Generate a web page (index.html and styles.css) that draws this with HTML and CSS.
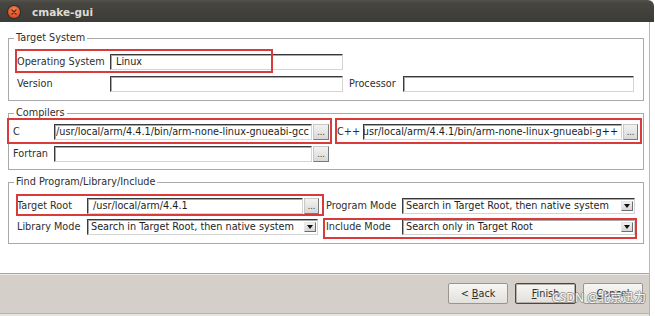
FILE: index.html
```html
<!DOCTYPE html>
<html>
<head>
<meta charset="utf-8">
<link rel="stylesheet" href="styles.css">
</head>
<body>
<div class="win">
  <header class="titlebar">
    <span class="close"><svg width="12" height="12" viewBox="0 0 12 12"><path d="M4 4 L8 8 M8 4 L4 8" stroke="#5a2412" stroke-width="1.3" stroke-linecap="round"/></svg></span>
    <span class="title">cmake-gui</span>
  </header>
  <main class="client">
    <div class="groups">
      <fieldset class="grp">
        <legend>Target System</legend>
        <div class="grid g1">
          <span class="lbl">Operating System</span>
          <div class="field"><span class="txt">Linux</span></div>
          <span></span><span></span>
          <span class="lbl">Version</span>
          <div class="field"></div>
          <span class="lbl lbl-r">Processor</span>
          <div class="field"></div>
        </div>
      </fieldset>

      <fieldset class="grp">
        <legend>Compilers</legend>
        <div class="grid g2">
          <span class="lbl">C</span>
          <div class="field flush"><span class="txt">/usr/local/arm/4.4.1/bin/arm-none-linux-gnueabi-gcc</span></div>
          <span class="dots">...</span>
          <span class="lbl lbl-r">C++</span>
          <div class="field scroll"><span class="txt">/usr/local/arm/4.4.1/bin/arm-none-linux-gnueabi-g++</span></div>
          <span class="dots">...</span>
          <span class="lbl">Fortran</span>
          <div class="field"></div>
          <span class="dots">...</span>
          <span></span><span></span><span></span>
        </div>
      </fieldset>

      <fieldset class="grp">
        <legend>Find Program/Library/Include</legend>
        <div class="grid g3">
          <span class="lbl">Target Root</span>
          <div class="field"><span class="txt">/usr/local/arm/4.4.1</span></div>
          <span class="dots">...</span>
          <span class="lbl lbl-r">Program Mode</span>
          <div class="combo"><span class="txt">Search in Target Root, then native system</span><span class="arrow"></span></div>
          <span class="lbl">Library Mode</span>
          <div class="combo span2"><span class="txt">Search in Target Root, then native system</span><span class="arrow"></span></div>
          <span class="lbl lbl-r">Include Mode</span>
          <div class="combo"><span class="txt">Search only in Target Root</span><span class="arrow"></span></div>
        </div>
      </fieldset>
    </div>

    <footer class="buttonbar">
      <button class="btn">&lt; <u>B</u>ack</button>
      <button class="btn default"><u>F</u>inish</button>
      <button class="btn"><u>C</u>ancel</button>
    </footer>
  </main>

  <div class="mark m-os"></div>
  <div class="mark m-c"></div>
  <div class="mark m-cxx"></div>
  <div class="mark m-root"></div>
  <div class="mark m-inc"></div>
  <div class="watermark">CSDN @北京迅为</div>
</div>
</body>
</html>
```

FILE: styles.css
```css
* { box-sizing: border-box; }

html, body {
  margin: 0;
  padding: 0;
  background: #ffffff;
}

body {
  width: 655px;
  height: 316px;
  overflow: hidden;
  font-family: "DejaVu Sans", "Noto Sans CJK SC", sans-serif;
  font-size: 9.7px;
  color: #2e2e2e;
}

.win {
  position: relative;
  width: 655px;
  height: 316px;
}

/* title bar */
.titlebar {
  width: 654px;
  height: 22px;
  background: linear-gradient(#55534e 0px, #46453f 3px, #3c3b37 100%);
  border-top-right-radius: 6px;
  display: flex;
  align-items: center;
}

.close {
  width: 12px;
  height: 12px;
  margin-left: 8px;
  margin-top: 2px;
  border-radius: 50%;
  background: radial-gradient(circle at 50% 35%, #f58a5c 0%, #e8582a 55%, #c23f14 100%);
  box-shadow: 0 0 0 1px #2e2d2a;
  display: flex;
}

.title {
  margin-left: 12px;
  margin-top: 1px;
  font-weight: bold;
  font-size: 10.5px;
  color: #dfdbd2;
}

/* client area */
.client {
  width: 650px;
  height: 294px;
  border-right: 1px solid #b8b6b0;
  display: flex;
  flex-direction: column;
}

.groups {
  padding: 9px 5px 0 8px;
  display: flex;
  flex-direction: column;
  gap: 5px;
}

.grp {
  margin: 0;
  padding: 0;
  border: 1px solid #a9a9a9;
  min-width: 0;
}

.grp legend {
  margin-left: 5px;
  padding: 0 2px;
  line-height: 14px;
  height: 14px;
  color: #2e2e2e;
}

.grid {
  display: grid;
  align-items: center;
}

.g1 {
  padding: 9px 8px 8px 8px;
  grid-template-columns: 93px 233px 60px 231px;
  grid-auto-rows: 16px;
  row-gap: 6px;
}

.g2 {
  padding: 4px 4px 7px 4px;
  grid-template-columns: 41px 258px 17px 34px 259px 16px;
  grid-auto-rows: 16px;
  row-gap: 6px;
}

.g3 {
  padding: 9px 7px 8px 8px;
  grid-template-columns: 70px 216px 16px 83px 233px;
  grid-auto-rows: 16px;
  row-gap: 5px;
}

.lbl {
  white-space: nowrap;
  line-height: 16px;
}

.lbl-r { padding-left: 6px; }
.g2 .lbl-r { padding-left: 8px; }
.g3 .lbl-r { padding-left: 7px; }

.field, .combo {
  height: 16px;
  background: #ffffff;
  border: 1px solid;
  border-color: #3a3a3a #d4d4d4 #d4d4d4 #3a3a3a;
  box-shadow: inset 1px 1px 0 #a8a8a8;
  display: flex;
  align-items: center;
  overflow: hidden;
  white-space: nowrap;
  color: #1e1e1e;
}

.field .txt {
  padding-left: 5px;
  line-height: 14px;
}

.field.flush .txt {
  padding-left: 1px;
  flex: none;
}

.field.scroll {
  justify-content: flex-end;
}

.field.scroll .txt {
  padding-left: 0;
  padding-right: 3px;
  flex: none;
}

.dots {
  height: 16px;
  margin-left: 1px;
  border: 1px solid #8e8e8e;
  border-color: #c8c8c8 #7a7a7a #7a7a7a #c8c8c8;
  background: linear-gradient(#f2f2f2, #d8d8d8);
  font-size: 8px;
  text-align: center;
  color: #333;
  display: flex;
  align-items: flex-end;
  justify-content: center;
  padding-bottom: 2px;
  line-height: 8px;
}

.combo {
  justify-content: space-between;
}

.combo .txt {
  padding-left: 3px;
  line-height: 14px;
}

.combo.span2 {
  grid-column: span 2;
  margin-right: 1px;
}

.arrow {
  flex: none;
  width: 12px;
  height: 10px;
  margin-right: 1px;
  background: linear-gradient(#f0f0f0, #d6d6d6);
  border: 1px solid;
  border-color: #e6e6e6 #6e6e6e #6e6e6e #e6e6e6;
  position: relative;
}

.arrow::after {
  content: "";
  position: absolute;
  left: 2px;
  top: 2px;
  border-left: 3px solid transparent;
  border-right: 3px solid transparent;
  border-top: 4px solid #111;
}

/* button bar */
.buttonbar {
  margin-top: auto;
  height: 43px;
  background: #d4d0c9;
  border-top: 1px solid #a8a59f;
  box-shadow: inset 0 1px 0 #ecebe7, inset 0 -2px 0 #e6e4df, inset 0 -3px 0 #b8b5ae;
  display: flex;
  justify-content: flex-end;
  align-items: flex-start;
  gap: 7px;
  padding: 9px 6px 0 0;
}

.btn {
  width: 60px;
  height: 21px;
  margin: 0;
  padding: 0;
  font-family: "DejaVu Sans", sans-serif;
  font-size: 9.7px;
  color: #2e2e2e;
  background: linear-gradient(#f7f6f4, #e2e0db);
  border: 1px solid #9a968f;
  border-radius: 2px;
}

.btn.default {
  width: 61px;
  border-color: #4a4741;
  box-shadow: inset 0 0 0 1px #b5b1aa;
}

.btn u { text-decoration: underline; }

/* annotation overlays */
.mark {
  position: absolute;
  border: 2px solid #d93a3c;
  pointer-events: none;
}

.m-os   { left: 15px;  top: 49px;  width: 258px; height: 24px; }
.m-c    { left: 7px;   top: 118px; width: 325px; height: 26px; }
.m-cxx  { left: 335px; top: 118px; width: 307px; height: 26px; }
.m-root { left: 16px;  top: 194px; width: 308px; height: 22px; }
.m-inc  { left: 323px; top: 218px; width: 314px; height: 21px; }

.watermark {
  position: absolute;
  left: 552px;
  top: 290px;
  font-family: "Noto Sans", "Noto Sans CJK SC", sans-serif;
  font-size: 12px;
  line-height: 15px;
  color: #ffffff;
  text-shadow: 1px 0 0 #8a867f, -1px 0 0 #8a867f, 0 1px 0 #8a867f, 0 -1px 0 #8a867f;
  opacity: 0.8;
  white-space: nowrap;
}
```
